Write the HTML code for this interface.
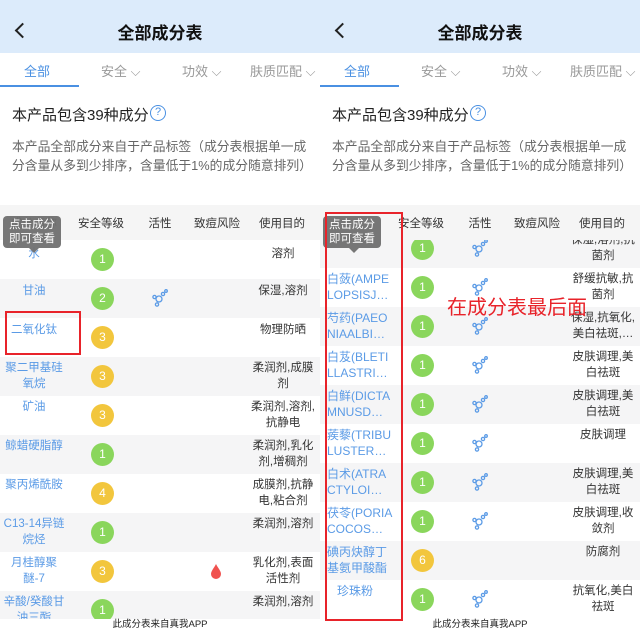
<!DOCTYPE html>
<html><head><meta charset="utf-8">
<style>
*{margin:0;padding:0;box-sizing:border-box}
body{width:640px;height:630px;overflow:hidden;background:#fff;font-family:"Liberation Sans","Noto Sans CJK SC",sans-serif;position:relative}
.p{position:absolute;top:0;width:320px;height:630px;overflow:hidden;background:#fff}
.hd{position:absolute;left:0;top:0;width:320px;height:53px;background:#dcebfb}
.hd .t{position:absolute;left:0;width:320px;top:19px;text-align:center;font-size:17px;font-weight:bold;color:#111}
.hd .b{position:absolute;left:17px;top:25px;width:11px;height:11px;border-left:2px solid #222;border-bottom:2px solid #222;transform:rotate(45deg)}
.tab{position:absolute;top:61px;font-size:13px;color:#999}
.tab.a{color:#4a90e2}
.ul{position:absolute;left:0;top:85px;width:79px;height:2px;background:#4a90e2}
.h1{position:absolute;left:12px;top:104px;font-size:15px;color:#222}
.q{position:absolute;left:150px;top:105px;width:16px;height:16px;border:1.5px solid #4a90e2;border-radius:50%;color:#4a90e2;font-size:11px;text-align:center;line-height:13px}
.desc{position:absolute;left:12px;top:137px;width:302px;font-size:12.8px;line-height:19px;color:#666}
.th{position:absolute;left:0;top:205px;width:320px;height:35px;background:#f5f5f5;font-size:11.5px;color:#333}
.th span{position:absolute;top:10px;transform:translateX(-50%);white-space:nowrap}
.r{position:absolute;left:0;width:320px;height:39px;font-size:11.5px}
.r.g{background:#f5f5f6}
.n{position:absolute;left:0;width:68px;top:4px;text-align:center;color:#5b9be6;line-height:15.5px;font-size:11.5px}
.p2 .n{left:7px;width:72px;text-align:left;font-size:12px;white-space:nowrap}
.u{position:absolute;left:248px;width:70px;top:4px;text-align:center;color:#333;line-height:15.5px}
.c{position:absolute;left:91px;top:8px;width:23px;height:23px;border-radius:50%;color:#fff;text-align:center;line-height:23px;font-size:12px}
.c1{background:#8ad65c}.c3{background:#f2c63d}
.m{position:absolute;left:152px;top:10px}
.tip{position:absolute;left:3px;top:216px;width:58px;height:32px;background:#707070;border-radius:4px;color:#fff;font-size:11.5px;line-height:14px;text-align:center;padding-top:2px;opacity:.95}
.tip:after{content:"";position:absolute;left:26px;bottom:-5px;border:5px solid transparent;border-bottom:0;border-top-color:#707070}
.ft{position:absolute;left:0;width:320px;top:619px;height:11px;text-align:center;font-size:9.5px;color:#222;line-height:11px}
</style></head><body>

<!-- LEFT -->
<div class="p" style="left:0">
<div class="hd"><div class="b"></div><div class="t">全部成分表</div></div>
<div class="tab a" style="left:24px">全部</div>
<div class="tab" style="left:101px">安全 ⌵</div>
<div class="tab" style="left:182px">功效 ⌵</div>
<div class="tab" style="left:250px">肤质匹配 ⌵</div>
<div class="ul"></div>
<div class="h1">本产品包含39种成分</div><div class="q">?</div>
<div class="desc">本产品全部成分来自于产品标签（成分表根据单一成分含量从多到少排序，含量低于1%的成分随意排列）</div>
<div class="th"><span style="left:34px">成分名称</span><span style="left:101px">安全等级</span><span style="left:160px">活性</span><span style="left:217px">致痘风险</span><span style="left:282px">使用目的</span></div>

<div class="r" style="top:240px"><div class="n" style="top:7px">水</div><div class="c c1">1</div><div class="u" style="top:7px">溶剂</div></div>
<div class="r g" style="top:279px"><div class="n" style="top:5px">甘油</div><div class="c c1">2</div><svg class="m" width="16" height="18" viewBox="0 0 16 18"><g fill="none" stroke="#5b9be6" stroke-width="1.3"><circle cx="7" cy="10" r="3"/><circle cx="2.5" cy="8" r="1.6"/><circle cx="5" cy="15.5" r="1.6"/><circle cx="11" cy="5" r="1.6"/><circle cx="14" cy="2" r="1.3"/></g></svg><div class="u" style="top:5px">保湿,溶剂</div></div>
<div class="r" style="top:318px"><div class="n" style="top:5px">二氧化钛</div><div class="c c3">3</div><div class="u" style="top:5px">物理防晒</div></div>
<div class="r g" style="top:357px"><div class="n">聚二甲基硅<br>氧烷</div><div class="c c3">3</div><div class="u">柔润剂,成膜<br>剂</div></div>
<div class="r" style="top:396px"><div class="n">矿油</div><div class="c c3">3</div><div class="u">柔润剂,溶剂,<br>抗静电</div></div>
<div class="r g" style="top:435px"><div class="n">鲸蜡硬脂醇</div><div class="c c1">1</div><div class="u">柔润剂,乳化<br>剂,增稠剂</div></div>
<div class="r" style="top:474px"><div class="n">聚丙烯酰胺</div><div class="c c3">4</div><div class="u">成膜剂,抗静<br>电,粘合剂</div></div>
<div class="r g" style="top:513px"><div class="n">C13-14异链<br>烷烃</div><div class="c c1">1</div><div class="u">柔润剂,溶剂</div></div>
<div class="r" style="top:552px"><div class="n">月桂醇聚<br>醚-7</div><div class="c c3">3</div><svg style="position:absolute;left:209px;top:11px" width="14" height="17" viewBox="0 0 14 17"><path d="M7 1C5 5 2 8 2 11a5 5 0 0 0 10 0C12 8 9 5 7 1z" fill="#f0524f"/></svg><div class="u">乳化剂,表面<br>活性剂</div></div>
<div class="r g" style="top:591px"><div class="n">辛酸/癸酸甘<br>油三酯</div><div class="c c1">1</div><div class="u">柔润剂,溶剂</div></div>
<div class="ft" style="background:#fff">此成分表来自真我APP</div>
<div class="tip">点击成分<br>即可查看</div>
<div style="position:absolute;left:5px;top:311px;width:76px;height:44px;border:2px solid #e8232a"></div>
</div>

<!-- RIGHT -->
<div class="p p2" style="left:320px">
<div class="hd"><div class="b"></div><div class="t">全部成分表</div></div>
<div class="tab a" style="left:24px">全部</div>
<div class="tab" style="left:101px">安全 ⌵</div>
<div class="tab" style="left:182px">功效 ⌵</div>
<div class="tab" style="left:250px">肤质匹配 ⌵</div>
<div class="ul"></div>
<div class="h1">本产品包含39种成分</div><div class="q">?</div>
<div class="desc">本产品全部成分来自于产品标签（成分表根据单一成分含量从多到少排序，含量低于1%的成分随意排列）</div>
<div class="th"><span style="left:34px">成分名称</span><span style="left:101px">安全等级</span><span style="left:160px">活性</span><span style="left:217px">致痘风险</span><span style="left:282px">使用目的</span></div>

<div class="r g" style="top:229px"><div class="c c1">1</div><svg class="m" width="16" height="18" viewBox="0 0 16 18"><g fill="none" stroke="#5b9be6" stroke-width="1.3"><circle cx="7" cy="10" r="3"/><circle cx="2.5" cy="8" r="1.6"/><circle cx="5" cy="15.5" r="1.6"/><circle cx="11" cy="5" r="1.6"/><circle cx="14" cy="2" r="1.3"/></g></svg><div class="u">保湿,溶剂,抗<br>菌剂</div></div>
<div class="th" style="top:205px"><span style="left:101px">安全等级</span><span style="left:160px">活性</span><span style="left:217px">致痘风险</span><span style="left:282px">使用目的</span></div>
<div class="r" style="top:268px"><div class="n">白蔹(AMPE<br>LOPSISJ…</div><div class="c c1">1</div><svg class="m" width="16" height="18" viewBox="0 0 16 18"><g fill="none" stroke="#5b9be6" stroke-width="1.3"><circle cx="7" cy="10" r="3"/><circle cx="2.5" cy="8" r="1.6"/><circle cx="5" cy="15.5" r="1.6"/><circle cx="11" cy="5" r="1.6"/><circle cx="14" cy="2" r="1.3"/></g></svg><div class="u">舒缓抗敏,抗<br>菌剂</div></div>
<div class="r g" style="top:307px"><div class="n">芍药(PAEO<br>NIAALBI…</div><div class="c c1">1</div><svg class="m" width="16" height="18" viewBox="0 0 16 18"><g fill="none" stroke="#5b9be6" stroke-width="1.3"><circle cx="7" cy="10" r="3"/><circle cx="2.5" cy="8" r="1.6"/><circle cx="5" cy="15.5" r="1.6"/><circle cx="11" cy="5" r="1.6"/><circle cx="14" cy="2" r="1.3"/></g></svg><div class="u">保湿,抗氧化,<br>美白祛斑,…</div></div>
<div class="r" style="top:346px"><div class="n">白芨(BLETI<br>LLASTRI…</div><div class="c c1">1</div><svg class="m" width="16" height="18" viewBox="0 0 16 18"><g fill="none" stroke="#5b9be6" stroke-width="1.3"><circle cx="7" cy="10" r="3"/><circle cx="2.5" cy="8" r="1.6"/><circle cx="5" cy="15.5" r="1.6"/><circle cx="11" cy="5" r="1.6"/><circle cx="14" cy="2" r="1.3"/></g></svg><div class="u">皮肤调理,美<br>白祛斑</div></div>
<div class="r g" style="top:385px"><div class="n">白鲜(DICTA<br>MNUSD…</div><div class="c c1">1</div><svg class="m" width="16" height="18" viewBox="0 0 16 18"><g fill="none" stroke="#5b9be6" stroke-width="1.3"><circle cx="7" cy="10" r="3"/><circle cx="2.5" cy="8" r="1.6"/><circle cx="5" cy="15.5" r="1.6"/><circle cx="11" cy="5" r="1.6"/><circle cx="14" cy="2" r="1.3"/></g></svg><div class="u">皮肤调理,美<br>白祛斑</div></div>
<div class="r" style="top:424px"><div class="n">蒺藜(TRIBU<br>LUSTER…</div><div class="c c1">1</div><svg class="m" width="16" height="18" viewBox="0 0 16 18"><g fill="none" stroke="#5b9be6" stroke-width="1.3"><circle cx="7" cy="10" r="3"/><circle cx="2.5" cy="8" r="1.6"/><circle cx="5" cy="15.5" r="1.6"/><circle cx="11" cy="5" r="1.6"/><circle cx="14" cy="2" r="1.3"/></g></svg><div class="u">皮肤调理</div></div>
<div class="r g" style="top:463px"><div class="n">白术(ATRA<br>CTYLOI…</div><div class="c c1">1</div><svg class="m" width="16" height="18" viewBox="0 0 16 18"><g fill="none" stroke="#5b9be6" stroke-width="1.3"><circle cx="7" cy="10" r="3"/><circle cx="2.5" cy="8" r="1.6"/><circle cx="5" cy="15.5" r="1.6"/><circle cx="11" cy="5" r="1.6"/><circle cx="14" cy="2" r="1.3"/></g></svg><div class="u">皮肤调理,美<br>白祛斑</div></div>
<div class="r" style="top:502px"><div class="n">茯苓(PORIA<br>COCOS…</div><div class="c c1">1</div><svg class="m" width="16" height="18" viewBox="0 0 16 18"><g fill="none" stroke="#5b9be6" stroke-width="1.3"><circle cx="7" cy="10" r="3"/><circle cx="2.5" cy="8" r="1.6"/><circle cx="5" cy="15.5" r="1.6"/><circle cx="11" cy="5" r="1.6"/><circle cx="14" cy="2" r="1.3"/></g></svg><div class="u">皮肤调理,收<br>敛剂</div></div>
<div class="r g" style="top:541px"><div class="n">碘丙炔醇丁<br>基氨甲酸酯</div><div class="c c3">6</div><div class="u">防腐剂</div></div>
<div class="r" style="top:580px"><div class="n" style="left:17px">珍珠粉</div><div class="c c1">1</div><svg class="m" width="16" height="18" viewBox="0 0 16 18"><g fill="none" stroke="#5b9be6" stroke-width="1.3"><circle cx="7" cy="10" r="3"/><circle cx="2.5" cy="8" r="1.6"/><circle cx="5" cy="15.5" r="1.6"/><circle cx="11" cy="5" r="1.6"/><circle cx="14" cy="2" r="1.3"/></g></svg><div class="u">抗氧化,美白<br>祛斑</div></div>
<div class="ft" style="background:#fff">此成分表来自真我APP</div>
<div class="tip">点击成分<br>即可查看</div>
<div style="position:absolute;left:5px;top:212px;width:78px;height:409px;border:2px solid #e8232a"></div>
<div style="position:absolute;left:127px;top:291px;font-size:20px;color:#e8232a;white-space:nowrap">在成分表最后面</div>
</div>
</body></html>
